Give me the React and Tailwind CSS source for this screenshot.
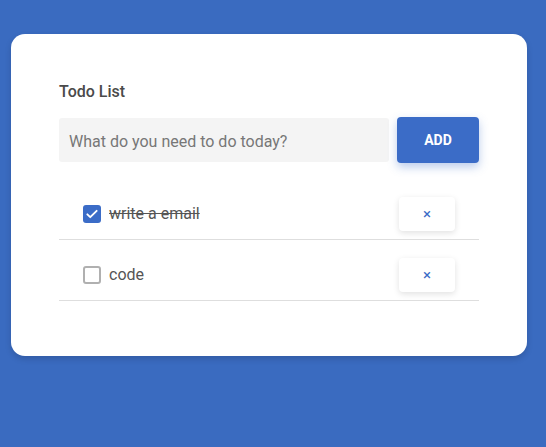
import React from "react";

function Check() {
  return (
    <svg width="14" height="14" viewBox="0 0 24 24" fill="none" stroke="white" strokeWidth="3.2" strokeLinecap="round" strokeLinejoin="round">
      <path d="M4 12.5l5 5L20 6.5" />
    </svg>
  );
}

function Row({ text, done }) {
  return (
    <div className="flex items-center justify-between border-b border-[#dedede] pl-[24px] pr-[24px] pt-[18px] pb-[8px]">
      <div className="flex items-center gap-[8px]">
        {done ? (
          <div className="w-[18px] h-[18px] rounded-[3px] bg-[#3b6cc7] flex items-center justify-center">
            <Check />
          </div>
        ) : (
          <div className="w-[18px] h-[18px] rounded-[3px] border-2 border-[#b0b0b0] bg-white" />
        )}
        <span className={"text-[16px] leading-6 text-[#555] " + (done ? "line-through" : "")}>{text}</span>
      </div>
      <button className="w-[56px] h-[34px] rounded-[4px] bg-white shadow-[0_2px_6px_rgba(0,0,0,0.12)] flex items-center justify-center text-[#3b6cc7] text-[15px] leading-none">
        ×
      </button>
    </div>
  );
}

export default function App() {
  return (
    <div className="w-[546px] h-[447px] bg-[#3a6bc0] pt-[34px] pl-[11px]" style={{ fontFamily: "Roboto, 'Noto Sans', sans-serif" }}>
      <div className="w-[516px] h-[322px] bg-white rounded-[14px] shadow-[0_3px_6px_rgba(0,0,0,0.15)] px-[48px] pt-[46px]">
        <div className="text-[16px] leading-6 font-medium text-[#4a4a4a]">Todo List</div>
        <div className="flex gap-[8px] mt-[13px] items-center">
          <div className="w-[330px] h-[44px] bg-[#f4f4f4] rounded-[3px] flex items-center pl-[10px] pt-[3px] text-[16px] text-[#777]">
            What do you need to do today?
          </div>
          <button className="w-[82px] h-[46px] rounded-[4px] bg-[#3b6cc7] text-white text-[14px] font-bold shadow-[0_4px_10px_rgba(59,108,199,0.35)]">
            ADD
          </button>
        </div>
        <div className="mt-[16px]">
          <Row text="write a email" done />
          <Row text="code" />
        </div>
      </div>
    </div>
  );
}
